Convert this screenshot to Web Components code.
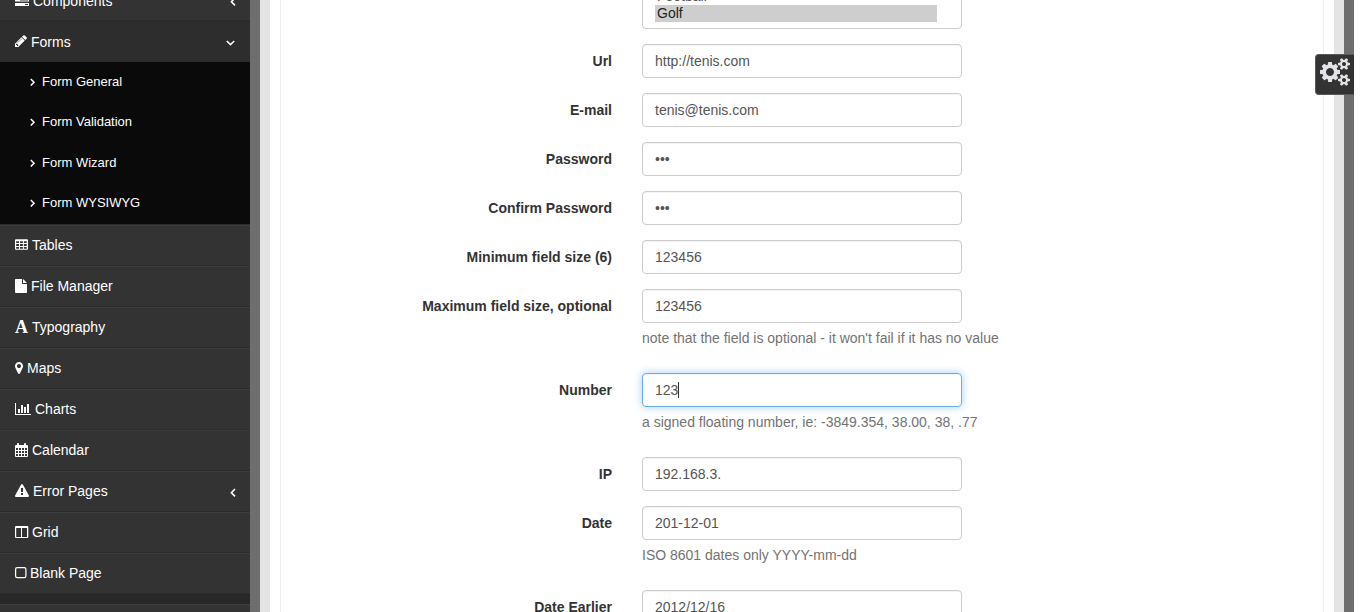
<!DOCTYPE html>
<html lang="en">
<head>
<meta charset="utf-8">
<title>Form Validation</title>
<style>
html,body{margin:0;height:100%;overflow:hidden;background:#fff}
body{font:14px/20px "Liberation Sans",Arial,sans-serif;color:#333}
</style>
</head>
<body>
<admin-page></admin-page>
<script>
const cogSmall = y => `M1600 ${y}q0-52-38-90t-90-38-90 38-38 90q0 53 37.5 90.5t90.5 37.5 90.5-37.5 37.5-90.5z`;
const cogTeeth = y => `M1856 ${y}v140q0 16-149 31-12 27-30 52 51 113 51 138 0 4-4 7-122 71-124 71-8 0-46-47t-52-68q-20 2-30 2t-30-2q-14 21-52 68t-46 47q-2 0-124-71-4-3-4-7 0-25 51-138-18-25-30-52-149-15-149-31v-140q0-16 149-31 13-29 30-52-51-113-51-138 0-4 4-7 4-2 35-20t59-34 30-16q8 0 46 46.5t52 67.5q20-2 30-2t30 2q51-71 92-112l6-2q4 0 124 70 4 3 4 7 0 25-51 138 17 23 30 52 149 15 149 31z`;
// name: [width, height, viewBox, markup]
const ICONS = {
  tasks: [14,14,'0 0 14 14','<path fill-rule="evenodd" d="M0 1h14v3H0zM8 2v1h5V2zM0 5.5h14v3H0zM5 6.5v1h8v-1zM0 10h14v3H0zM10 11v1h3v-1z"/>'],
  pencil: [12,14,'128 0 1536 1792','<path d="M491 1536l91-91-235-235-91 91v107h128v128h107zm523-928q0-22-22-22-10 0-17 7l-542 542q-7 7-7 17 0 22 22 22 10 0 17-7l542-542q7-7 7-17zm-54-192l416 416-832 832h-416v-416zm683 96q0 53-37 90l-166 166-416-416 166-165q36-38 90-38 53 0 91 38l235 234q37 39 37 91z"/>'],
  table: [13,14,'0 0 13.5 14','<path fill-rule="evenodd" d="M1 1h11.5q1 0 1 1v9q0 1-1 1H1q-1 0-1-1V2q0-1 1-1zM1.2 3v2h3V3zM5.2 3v2h3V3zM9.2 3v2h3V3zM1.2 6v2h3V6zM5.2 6v2h3V6zM9.2 6v2h3V6zM1.2 9v2h3V9zM5.2 9v2h3V9zM9.2 9v2h3V9z"/>'],
  file: [12,14,'0 0 12 14','<path d="M.7 0H7v4.3q0 .7.7.7H12v8.3q0 .7-.7.7H.7q-.7 0-.7-.7V.7Q0 0 .7 0zM8 .1q.3.1.5.3l3.1 3.1q.2.2.3.5H8z"/>'],
  marker: [8,14,'0 0 1024 1792','<path d="M768 640q0-106-75-181t-181-75-181 75-75 181 75 181 181 75 181-75 75-181zm256 0q0 109-33 179l-364 774q-16 33-47.5 52t-67.5 19-67.5-19-46.5-52l-365-774q-33-70-33-179 0-212 150-362t362-150 362 150 150 362z"/>'],
  chart: [16,14,'0 0 16 14','<path d="M0 1h1v11h15v1H0zM3 7h2v4H3zM6 3h2v8H6zM9 5h2v6H9zM12 2h2v9h-2z"/>'],
  calendar: [13,14,'0 0 13 14','<path fill-rule="evenodd" d="M1 2h1V1q0-1 1-1t1 1v1h5V1q0-1 1-1t1 1v1h1q1 0 1 1v10q0 1-1 1H1q-1 0-1-1V3q0-1 1-1zM1 5v2h2V5zM4 5v2h2V5zM7 5v2h2V5zM10 5v2h2V5zM1 8v2h2V8zM4 8v2h2V8zM7 8v2h2V8zM10 8v2h2V8zM1 11v2h2v-2zM4 11v2h2v-2zM7 11v2h2v-2zM10 11v2h2v-2z"/>'],
  warning: [14,14,'0 0 1792 1792','<path d="M1024 1375v-190q0-14-9.5-23.5t-22.5-9.5h-192q-13 0-22.5 9.5t-9.5 23.5v190q0 14 9.5 23.5t22.5 9.5h192q13 0 22.5-9.5t9.5-23.5zm-2-374l18-459q0-12-10-19-13-11-24-11h-220q-11 0-24 11-10 7-10 21l17 457q0 10 10 16.5t24 6.5h185q14 0 23.5-6.5t10.5-16.5zm-14-934l768 1408q35 63-2 126-17 29-46.5 46t-63.5 17h-1536q-34 0-63.5-17t-46.5-46q-37-63-2-126l768-1408q17-31 47-49t65-18 65 18 47 49z"/>'],
  columns: [13,14,'0 0 13 14','<path fill-rule="evenodd" d="M1 1h11.4q.9 0 .9 1v10q0 1-1 1H1q-1 0-1-1V2q0-1 1-1zM1.2 3v9H6V3zM7 3v9h5V3z"/>'],
  square: [11,14,'0 0 11 14','<rect x=".6" y="1.6" width="10.3" height="9.9" rx="1.6" fill="none" stroke="currentColor" stroke-width="1.25"/>'],
  left: [6,10,'0 0 6 10','<path d="M5 1L1.4 4.7 5 8.4" fill="none" stroke="currentColor" stroke-width="1.6"/>'],
  right: [6,10,'0 0 6 10','<path d="M.8 1L4 4.3.8 7.6" fill="none" stroke="currentColor" stroke-width="1.5"/>'],
  down: [9,10,'0 0 9 10','<path d="M.8 3l3.7 3.6L8.2 3" fill="none" stroke="currentColor" stroke-width="1.6"/>'],
  cogs: [30,28,'0 0 1920 1792',`<path d="M832 896q0-106-75-181t-181-75-181 75-75 181 75 181 181 75 181-75 75-181zM1216 805v185q0 10-7 19.5t-16 10.5l-155 24q-11 35-32 76 34 48 90 115 7 11 7 20 0 12-7 19-23 30-82.5 89.5t-78.5 59.5q-11 0-21-7l-115-90q-37 19-77 31-11 108-23 155-7 24-30 24h-186q-11 0-20-7.5t-10-17.5l-23-153q-34-10-75-31l-118 89q-7 7-20 7-11 0-21-8-144-133-144-160 0-9 7-19 10-14 41-53t47-61q-23-44-35-82l-152-24q-10-1-17-9.5t-7-19.5v-185q0-10 7-19.5t16-10.5l155-24q11-35 32-76-34-48-90-115-7-11-7-20 0-12 7-20 22-30 82-89t79-59q11 0 21 7l115 90q34-18 77-32 11-108 23-154 7-24 30-24h186q11 0 20 7.5t10 17.5l23 153q34 10 75 31l118-89q8-7 20-7 11 0 21 8 144 133 144 160 0 8-7 19-12 16-42 54t-45 60q23 48 34 82l152 23q10 2 17 10.5t7 19.5z${cogSmall(1408)}${cogSmall(384)}${cogTeeth(1338)}${cogTeeth(314)}" fill-rule="evenodd"/>`]
};
const define = (name, render) => customElements.define(name, class extends HTMLElement {
  connectedCallback() {
    if (this.shadowRoot) return;
    const t = document.createElement('template');
    t.innerHTML = render(this);
    this.attachShadow({mode: 'open'}).append(t.content.cloneNode(true));
  }
});

define('ui-icon', el => {
  const name = el.getAttribute('name');
  const style = '<style>:host{display:block;flex:none}svg{display:block;overflow:visible;fill:currentColor}b{display:block;width:13px;text-align:center;font:bold 18px/14px "Liberation Serif",serif}</style>';
  if (name === 'font') return style + '<b>A</b>';
  const [w,h,box,body] = ICONS[name];
  return `${style}<svg width="${w}" height="${h}" viewBox="${box}">${body}</svg>`;
});

define('nav-item', el => `
<style>
:host{display:flex;box-sizing:border-box;height:41px;align-items:flex-start;gap:4px;padding:9px 15px 0;
 background:#333;border-top:1px solid #3c3c3c;border-bottom:1px solid #2c2c2c;color:#fff}
:host([open]){background:#2d2d2d;border-color:#2a2a2a #2d2d2d #2d2d2d}
:host([low]) span{padding-top:1px}
ui-icon{margin-top:3px}
.arrow{margin:7px 0 0 auto}
.arrow[name=left]{margin-right:-1px}
</style>
<ui-icon name="${el.getAttribute('icon')}"></ui-icon><span><slot></slot></span>
${el.hasAttribute('arrow') ? `<ui-icon class="arrow" name="${el.getAttribute('arrow')}"></ui-icon>` : ''}`);

define('sub-item', () => `
<style>
:host{display:flex;height:40.5px;box-sizing:border-box;align-items:center;gap:6px;padding:0 0 .7px 30px;font-size:13px;color:#fff}
ui-icon{padding-top:2px}
</style>
<ui-icon name="right"></ui-icon><span><slot></slot></span>`);

define('side-nav', () => `
<style>
:host{display:block;width:250px;flex:none;background:#282828;overflow:hidden}
nav{margin-top:-20px}
.sub{background:#0a0a0a;height:162px;border-bottom:1px solid #2c2c2c}
.foot{margin-top:10px;height:20px;background:#333;border-top:1px solid #3e3e3e}
</style>
<nav>
<nav-item icon="tasks" arrow="left" low>Components</nav-item>
<nav-item icon="pencil" arrow="down" open low>Forms</nav-item>
<div class="sub"><sub-item>Form General</sub-item><sub-item>Form Validation</sub-item><sub-item>Form Wizard</sub-item><sub-item>Form WYSIWYG</sub-item></div>
<nav-item icon="table">Tables</nav-item>
<nav-item icon="file">File Manager</nav-item>
<nav-item icon="font">Typography</nav-item>
<nav-item icon="marker">Maps</nav-item>
<nav-item icon="chart">Charts</nav-item>
<nav-item icon="calendar">Calendar</nav-item>
<nav-item icon="warning" arrow="left">Error Pages</nav-item>
<nav-item icon="columns">Grid</nav-item>
<nav-item icon="square">Blank Page</nav-item>
<div class="foot"></div>
</nav>`);

define('form-row', el => `
<style>
:host{display:grid;grid-template-columns:331px 320px;column-gap:30px;margin-bottom:15px}
label{font-weight:bold;text-align:right;padding-top:7px}
.box{box-sizing:border-box;height:34px;border:1px solid #ccc;border-radius:4px;padding:6px 12px;color:#555;
 box-shadow:inset 0 1px 1px rgba(0,0,0,.05);display:flex}
:host([focused]) .box{border-color:#66afe9;box-shadow:inset 0 1px 1px rgba(0,0,0,.05),0 0 8px rgba(102,175,233,.6)}
i{width:1px;height:16px;margin-top:2px;background:#333}
p{margin:5px 0 10px;color:#737373;white-space:nowrap}
</style>
<label>${el.getAttribute('label')}</label>
<div><div class="box"><span><slot></slot></span>${el.hasAttribute('focused') ? '<i></i>' : ''}</div>
${el.hasAttribute('help') ? `<p>${el.getAttribute('help')}</p>` : ''}</div>`);

define('sport-list', () => `
<style>
:host{display:flex;box-sizing:border-box;width:320px;height:109px;margin:0 0 15px 361px;border:1px solid #ccc;border-radius:4px;
 padding:6px 12px;flex-direction:column;justify-content:flex-end;line-height:17px;color:#555}
div{width:280px;padding-left:2px}
.on{background:#cecece;color:#222}
</style>
<div>Football</div><div class="on">Golf</div>`);

define('validation-form', () => `
<style>:host{display:block;margin-top:-80px}</style>
<sport-list></sport-list>
<form-row label="Url">http://tenis.com</form-row>
<form-row label="E-mail">tenis@tenis.com</form-row>
<form-row label="Password">•••</form-row>
<form-row label="Confirm Password">•••</form-row>
<form-row label="Minimum field size (6)">123456</form-row>
<form-row label="Maximum field size, optional" help="note that the field is optional - it won't fail if it has no value">123456</form-row>
<form-row label="Number" focused help="a signed floating number, ie: -3849.354, 38.00, 38, .77">123</form-row>
<form-row label="IP">192.168.3.</form-row>
<form-row label="Date" help="ISO 8601 dates only YYYY-mm-dd">201-12-01</form-row>
<form-row label="Date Earlier">2012/12/16</form-row>`);

define('settings-tab', () => `
<style>
:host{position:absolute;right:0;top:54px;width:39px;height:41px;box-sizing:border-box;background:#333;border:1px solid #595959;border-right:0;
 border-radius:4px 0 0 4px;padding:3px 0 0 5px;color:#e4e4e8}
</style><ui-icon name="cogs"></ui-icon>`);

define('admin-page', () => `
<style>
:host{display:flex;position:relative;width:1354px;height:612px;overflow:hidden}
main{flex:1;box-sizing:border-box;display:flex;border:solid #6e6e6e;border-width:0 10px;min-width:0}
.frame{flex:1;display:flex;border:solid #e4e4e4;border-width:0 10px;padding:0 10px;min-width:0}
.panel{flex:1;border:solid #eee;border-width:0 1px;overflow:hidden;min-width:0}
</style>
<side-nav></side-nav>
<main><div class="frame"><div class="panel"><validation-form></validation-form></div></div></main>
<settings-tab></settings-tab>`);
</script>
</body>
</html>
